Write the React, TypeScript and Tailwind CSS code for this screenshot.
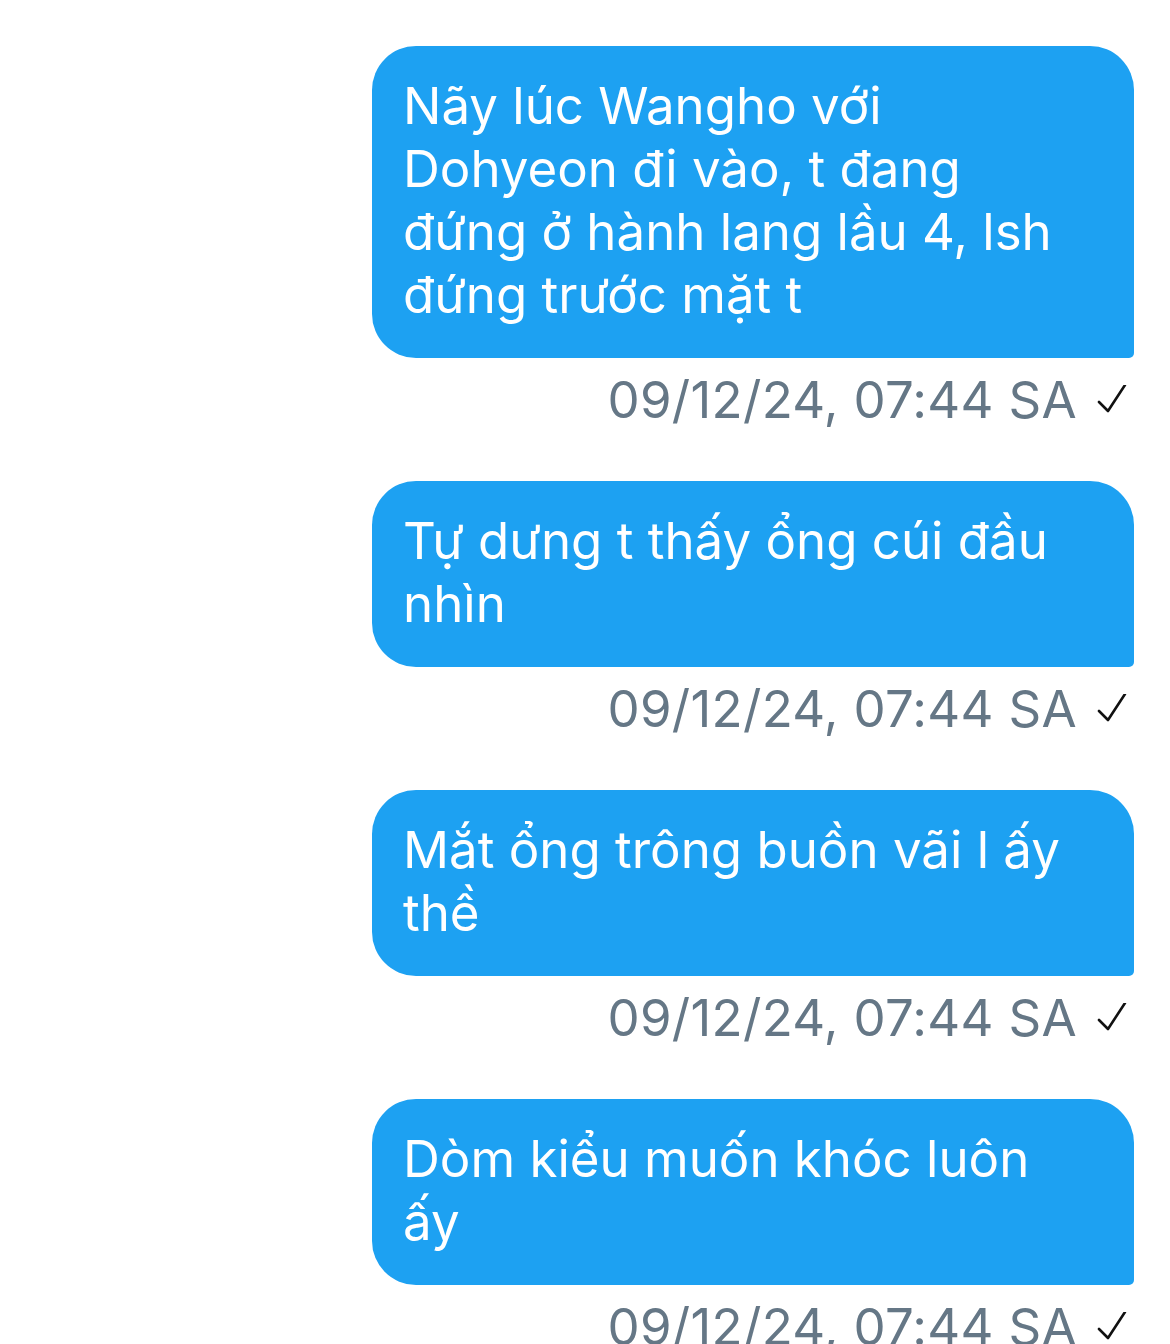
import { Fragment } from 'react';

const messages: string[][] = [
  ['Nãy lúc Wangho với', 'Dohyeon đi vào, t đang', 'đứng ở hành lang lầu 4, lsh', 'đứng trước mặt t'],
  ['Tự dưng t thấy ổng cúi đầu', 'nhìn'],
  ['Mắt ổng trông buồn vãi l ấy', 'thề'],
  ['Dòm kiểu muốn khóc luôn', 'ấy'],
];

function Check() {
  return (
    <svg width="30" height="30" viewBox="0 0 30 30" className="shrink-0">
      <polyline points="2,17 11,26 28,0" fill="none" stroke="#111" strokeWidth="2.6" strokeLinecap="round" strokeLinejoin="round" />
    </svg>
  );
}

export default function App() {
  return (
    <div className="min-h-screen bg-white pt-[46px] pr-[36px] font-['Inter','Noto_Sans',sans-serif]">
      <div className="flex flex-col items-end">
        {messages.map((lines, i) => (
          <div key={i} className="flex flex-col items-end mb-[50px]">
            <div className="w-[762px] bg-[#1da1f2] text-white text-[51px] leading-[63px] px-[31px] pt-[28px] pb-[32px] rounded-[44px] rounded-br-[5px]">
              {lines.map((l, j) => (
                <Fragment key={j}>
                  {l}
                  {j < lines.length - 1 && <br />}
                </Fragment>
              ))}
            </div>
            <div className="flex items-center gap-[20px] mt-[10px] mr-[7px] h-[63px]">
              <span className="text-[51px] leading-[63px] tracking-[0.3px] text-[#657786]">09/12/24, 07:44 SA</span>
              <Check />
            </div>
          </div>
        ))}
      </div>
    </div>
  );
}
